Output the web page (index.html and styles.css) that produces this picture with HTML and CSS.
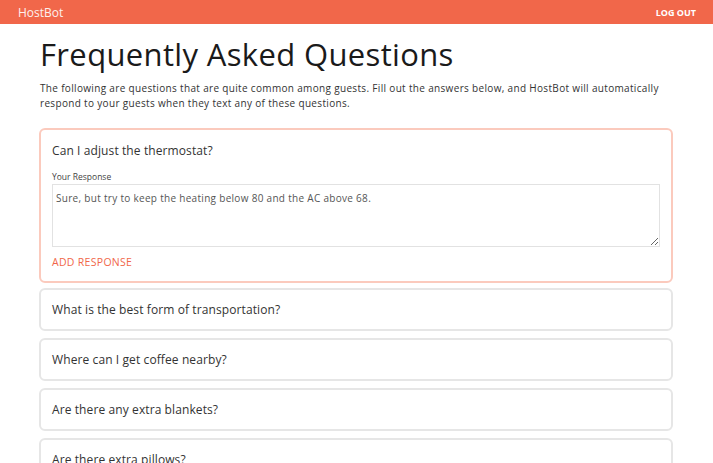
FILE: index.html
```html
<!DOCTYPE html>
<html lang="en">
<head>
  <meta charset="UTF-8" />
  <title>HostBot - FAQ</title>
  <link rel="stylesheet" href="styles.css">
</head>
<body>
  <div class="topbar">
    <span class="brand">HostBot</span>
    <a class="logout" href="#">LOG OUT</a>
  </div>

  <div class="page">
    <h1>Frequently Asked Questions</h1>
    <p class="intro">The following are questions that are quite common among guests. Fill out the answers below, and HostBot will automatically respond to your guests when they text any of these questions.</p>

    <div class="faq open">
      <div class="question">Can I adjust the thermostat?</div>
      <label class="label" for="resp1">Your Response</label>
      <textarea id="resp1">Sure, but try to keep the heating below 80 and the AC above 68.</textarea>
      <a class="add" href="#">ADD RESPONSE</a>
    </div>
    <div class="faq">
      <div class="question">What is the best form of transportation?</div>
    </div>
    <div class="faq">
      <div class="question">Where can I get coffee nearby?</div>
    </div>
    <div class="faq">
      <div class="question">Are there any extra blankets?</div>
    </div>
    <div class="faq">
      <div class="question">Are there extra pillows?</div>
    </div>
  </div>
</body>
</html>
```

FILE: styles.css
```css
body {
  margin: 0;
  font-family: 'Open Sans', sans-serif;
  color: #222;
  background: white;
}
.topbar {
  background-color: #f1674a;
  height: 24px;
  display: flex;
  align-items: center;
  justify-content: space-between;
  padding: 0 17px 0 18px;
}
.brand {
  color: #fff;
  font-size: 12px;
  opacity: 0.9;
}
.logout {
  color: #fff;
  font-size: 9px;
  font-weight: bold;
  text-decoration: none;
}
.page {
  padding: 0 40px;
}
h1 {
  font-weight: 400;
  font-size: 31px;
  margin: 9px 0 6px;
  color: #1a1a1a;
  letter-spacing: 0.35px;
}
.intro {
  font-size: 10px;
  letter-spacing: 0.33px;
  line-height: 15px;
  color: #333;
  margin: 0 0 17px;
}
.faq {
  border: 2px solid #e6e6e6;
  border-radius: 6px;
  margin: 0 0 7px -1px;
  padding: 0 11px;
  height: 39px;
  display: flex;
  flex-direction: column;
  justify-content: center;
}
.faq.open {
  border-color: #fbcabd;
  height: auto;
  display: block;
  padding: 12px 11px 12px;
  margin-bottom: 5px;
}
.question {
  font-size: 12px;
  letter-spacing: 0.1px;
  color: #333;
}
.label {
  display: block;
  font-size: 8.5px;
  color: #444;
  margin: 12px 0 2px;
}
textarea {
  display: block;
  box-sizing: border-box;
  width: 100%;
  height: 63px;
  border: 1px solid #e2e2e2;
  font-family: 'Open Sans', sans-serif;
  font-size: 10px;
  letter-spacing: 0.3px;
  color: #555;
  padding: 6px 3px;
  resize: vertical;
}
.add {
  display: block;
  margin-top: 8px;
  color: #f1674a;
  font-size: 10.5px;
  letter-spacing: 0.3px;
  text-decoration: none;
}
```
